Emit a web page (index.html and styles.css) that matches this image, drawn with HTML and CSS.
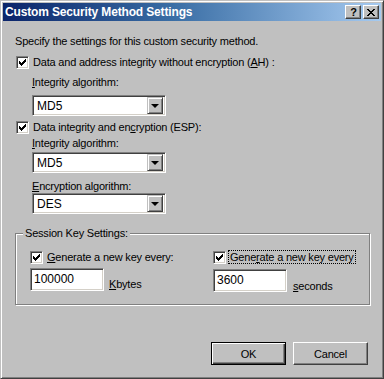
FILE: index.html
```html
<!DOCTYPE html>
<html>
<head>
<meta charset="utf-8">
<link rel="stylesheet" href="styles.css">
</head>
<body>
<div class="window">
  <div class="titlebar">
    <span class="title">Custom Security Method Settings</span>
    <div class="tbtns">
      <span class="tbtn help">?</span>
      <span class="tbtn close"><svg width="8" height="7" viewBox="0 0 8 7" shape-rendering="crispEdges"><path d="M0 0h2v1h1v1h2V1h1V0h2v1H7v1H6v1H5v1h1v1h1v1h1v1H6V6H5V5H3v1H2v1H0V6h1V5h1V4h1V3H2V2H1V1H0z" fill="#000"/></svg></span>
    </div>
  </div>
  <div class="content">
    <p class="intro">Specify the settings for this custom security method.</p>

    <div class="check row1">
      <span class="cb"><svg class="tick" width="7" height="7" viewBox="0 0 7 7" shape-rendering="crispEdges"><path d="M0 2h1v3H0z M1 3h1v3H1z M2 4h1v3H2z M3 3h1v3H3z M4 2h1v3H4z M5 1h1v3H5z M6 0h1v3H6z" fill="#000"/></svg></span>
      <span class="ctext">Data and address integrity without encryption (<u>A</u>H) :</span>
    </div>
    <div class="lbl l1"><u>I</u>ntegrity algorithm:</div>
    <div class="combo c1"><span class="ctx">MD5</span><span class="dd"><span class="tri"></span></span></div>

    <div class="check row2">
      <span class="cb"><svg class="tick" width="7" height="7" viewBox="0 0 7 7" shape-rendering="crispEdges"><path d="M0 2h1v3H0z M1 3h1v3H1z M2 4h1v3H2z M3 3h1v3H3z M4 2h1v3H4z M5 1h1v3H5z M6 0h1v3H6z" fill="#000"/></svg></span>
      <span class="ctext">Data integrity and en<u>c</u>ryption (ESP):</span>
    </div>
    <div class="lbl l2"><u>I</u>ntegrity algorithm:</div>
    <div class="combo c2"><span class="ctx">MD5</span><span class="dd"><span class="tri"></span></span></div>
    <div class="lbl l3"><u>E</u>ncryption algorithm:</div>
    <div class="combo c3"><span class="ctx">DES</span><span class="dd"><span class="tri"></span></span></div>

    <div class="group">
      <span class="legend">Session Key Settings:</span>
      <div class="gcols">
        <div class="gcol">
          <div class="check">
            <span class="cb"><svg class="tick" width="7" height="7" viewBox="0 0 7 7" shape-rendering="crispEdges"><path d="M0 2h1v3H0z M1 3h1v3H1z M2 4h1v3H2z M3 3h1v3H3z M4 2h1v3H4z M5 1h1v3H5z M6 0h1v3H6z" fill="#000"/></svg></span>
            <span class="ctext"><u>G</u>enerate a new key every:</span>
          </div>
          <div class="inrow">
            <div class="tinput i1">100000</div>
            <span class="unit u1"><u>K</u>bytes</span>
          </div>
        </div>
        <div class="gcol">
          <div class="check">
            <span class="cb"><svg class="tick" width="7" height="7" viewBox="0 0 7 7" shape-rendering="crispEdges"><path d="M0 2h1v3H0z M1 3h1v3H1z M2 4h1v3H2z M3 3h1v3H3z M4 2h1v3H4z M5 1h1v3H5z M6 0h1v3H6z" fill="#000"/></svg></span>
            <span class="ctext focus">Gene<u>r</u>ate a new key every</span>
          </div>
          <div class="inrow">
            <div class="tinput i2">3600</div>
            <span class="unit u2"><u>s</u>econds</span>
          </div>
        </div>
      </div>
    </div>

    <div class="buttons">
      <div class="btn default"><span class="bin">OK</span></div>
      <div class="btn"><span class="bin">Cancel</span></div>
    </div>
  </div>
</div>
</body>
</html>
```
FILE: styles.css
```css
* { box-sizing: border-box; }
html, body { margin: 0; padding: 0; background: #c0c0c0; }
body { font-family: "Liberation Sans", Arial, sans-serif; font-size: 11px; letter-spacing: -0.2px; color: #000; }
u { text-decoration: underline; text-underline-offset: 1px; }

.window {
  width: 384px; height: 379px;
  background: #c0c0c0;
  border: 1px solid;
  border-color: #c0c0c0 #404040 #404040 #c0c0c0;
  box-shadow: inset 1px 1px 0 #fff, inset -1px -1px 0 #808080;
  padding: 2px;
}

.titlebar {
  height: 18px;
  background: linear-gradient(to right, #0a246a 0%, #3a6ea5 45%, #a6caf0 100%);
  display: flex; align-items: center; justify-content: space-between;
  padding: 0 2px 0 2px;
}
.title { color: #fff; font-weight: bold; font-size: 12px; letter-spacing: -0.15px; }
.tbtns { display: flex; gap: 2px; }
.tbtn {
  width: 16px; height: 14px;
  background: #c0c0c0;
  border: 1px solid; border-color: #fff #404040 #404040 #fff;
  box-shadow: inset -1px -1px 0 #808080;
  display: flex; align-items: center; justify-content: center;
  font-weight: bold; font-size: 11px; line-height: 1; letter-spacing: 0;
}
.tbtn.help { padding-left: 1px; }

.content { padding: 0 0 0 12px; }
.intro { margin: 13px 0 0 0; line-height: 14px; height: 14px; }

.check { display: flex; align-items: center; height: 14px; }
.cb {
  width: 13px; height: 13px; flex: none;
  background: #fff;
  border: 1px solid; border-color: #808080 #fff #fff #808080;
  box-shadow: inset 1px 1px 0 #404040, inset -1px -1px 0 #d4d0c8;
  display: flex; align-items: center; justify-content: center;
  margin-right: 4px;
}
.tick { display: block; }
.row1 { margin: 7px 0 0 1px; }
.row2 { margin: 4px 0 0 1px; }

.lbl { margin-left: 17px; line-height: 14px; height: 14px; }
.l1 { margin-top: 6px; }
.l2 { margin-top: 2px; }
.l3 { margin-top: 6px; }

.combo {
  margin-left: 17px;
  width: 134px; height: 21px;
  background: #fff;
  border: 1px solid; border-color: #808080 #fff #fff #808080;
  box-shadow: inset 1px 1px 0 #404040, inset -1px -1px 0 #d4d0c8;
  display: flex; align-items: center; justify-content: space-between;
  padding: 2px;
}
.ctx { padding-left: 2px; font-size: 12px; letter-spacing: 0; }
.c1 { margin-top: 6px; }
.c2 { margin-top: 2px; }
.c3 { margin-top: 0; }
.dd {
  width: 16px; height: 17px;
  background: #c0c0c0;
  border: 1px solid; border-color: #c0c0c0 #404040 #404040 #c0c0c0;
  box-shadow: inset 1px 1px 0 #fff, inset -1px -1px 0 #808080;
  display: flex; align-items: center; justify-content: center;
}
.tri {
  width: 0; height: 0;
  border-left: 4px solid transparent; border-right: 4px solid transparent;
  border-top: 4px solid #000;
  margin-top: 1px;
}

.group {
  position: relative;
  margin: 19px 0 0 0;
  width: 355px; height: 72px;
  border: 1px solid #808080;
  box-shadow: 1px 1px 0 #fff, inset 1px 1px 0 #fff;
  padding: 16px 0 0 14px;
}
.legend {
  position: absolute; left: 7px; top: -8px;
  background: #c0c0c0; padding: 0 2px;
  line-height: 14px;
}
.gcols { display: grid; grid-template-columns: 183px auto; }
.gcol .check { height: 14px; }
.ctext.focus { outline: 1px dotted #000; outline-offset: 0; padding: 0 1px; margin-left: -1px; }
.inrow { display: flex; align-items: flex-end; margin-top: 4px; }
.tinput {
  width: 74px; height: 23px;
  background: #fff;
  border: 1px solid; border-color: #808080 #fff #fff #808080;
  box-shadow: inset 1px 1px 0 #404040, inset -1px -1px 0 #d4d0c8;
  padding: 3px 0 0 3px;
  font-size: 12px; letter-spacing: 0;
}
.i2 { margin-top: 1px; }
.unit { line-height: 14px; margin-left: 5px; margin-bottom: 0; }
.u2 { margin-left: 6px; margin-bottom: -1px; }

.buttons { display: flex; justify-content: flex-end; gap: 7px; margin: 37px 13px 0 0; }
.btn {
  width: 75px; height: 23px;
  background: #c0c0c0;
  border: 1px solid; border-color: #fff #404040 #404040 #fff;
  box-shadow: inset -1px -1px 0 #808080;
  display: flex; align-items: center; justify-content: center;
}
.btn.default {
  border: 1px solid #000;
  box-shadow: inset 1px 1px 0 #fff, inset -1px -1px 0 #404040, inset -2px -2px 0 #808080;
}
.bin { line-height: 14px; }
```
